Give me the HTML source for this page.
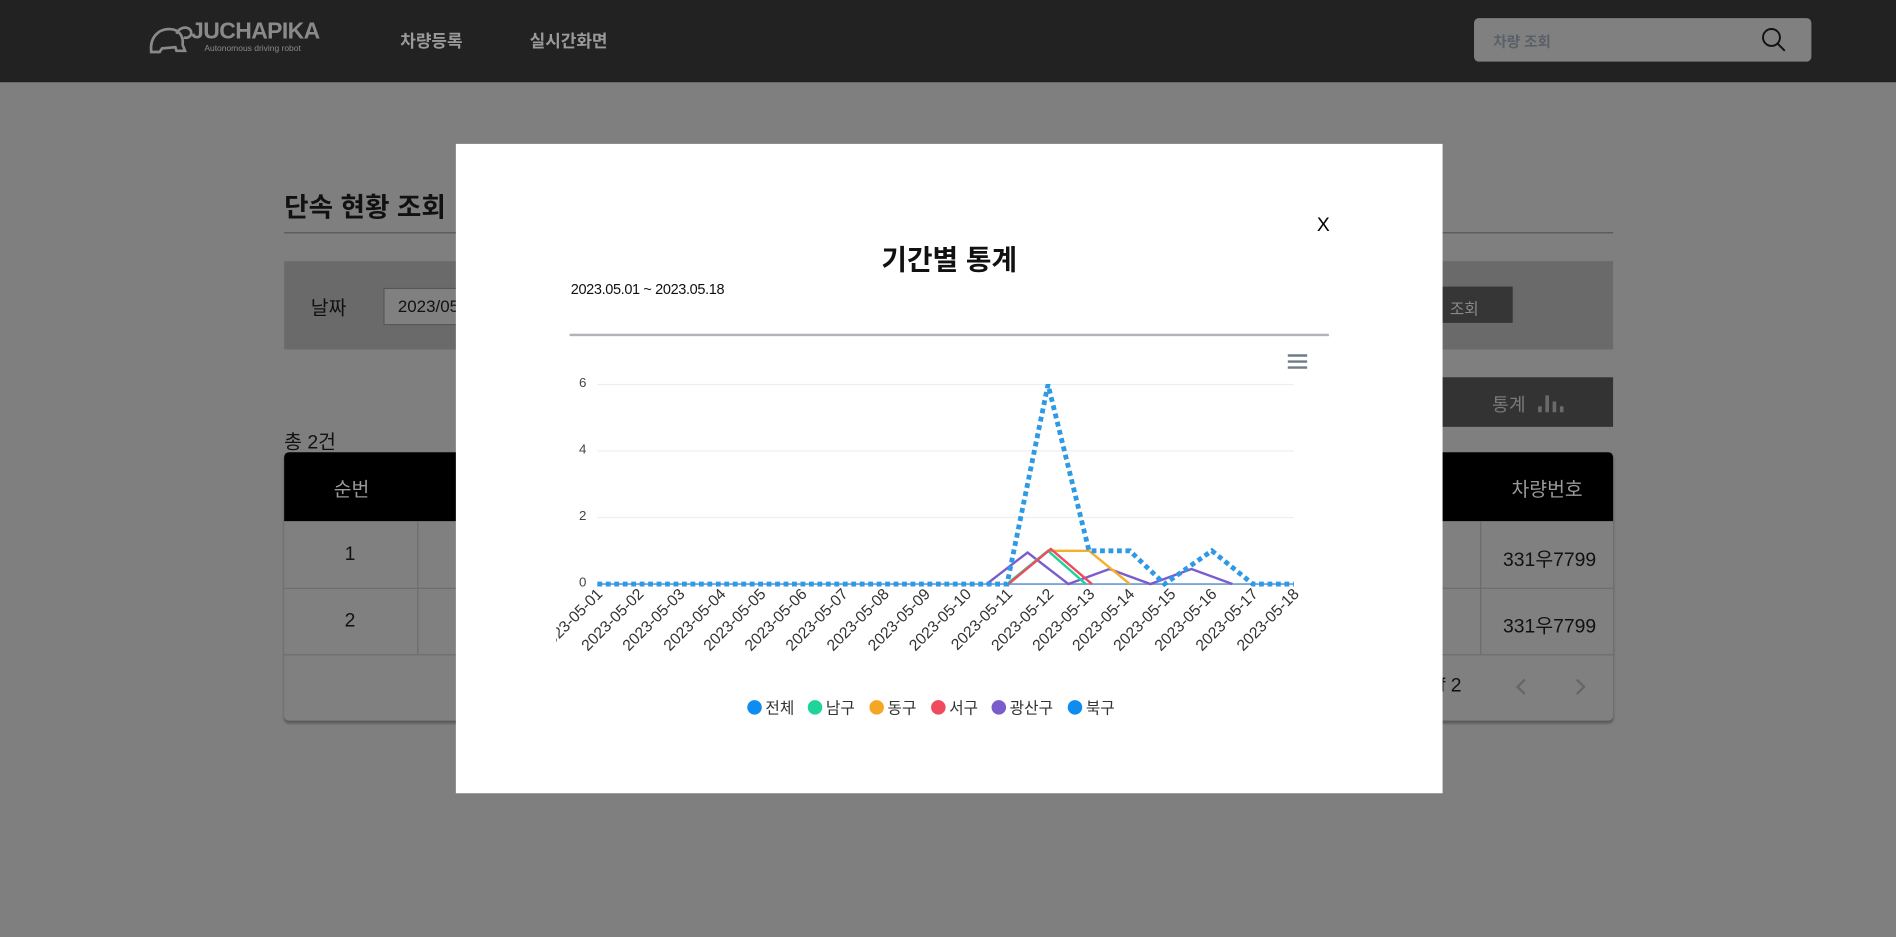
<!DOCTYPE html>
<html><head><meta charset="utf-8"><style>
html,body{margin:0;padding:0;width:1896px;height:937px;overflow:hidden;background:#7f7f7f;font-family:"Liberation Sans","Noto Sans CJK KR",sans-serif}
#w{position:absolute;left:0;top:0;width:1568px;height:775px;transform:scale(1.2092);transform-origin:0 0}
.a{position:absolute;white-space:nowrap}
</style></head><body><div id="w">
<div class="a" style="left:0;top:0;width:1568px;height:68px;background:#222"></div>
<svg class="a" style="left:122px;top:18px" width="38" height="28" viewBox="0 0 38 28"><path d="M3 24 C2 14 8 6 18 6 C26 6 30 12 29 19 L31 24 L24 24 L23 21 L12 22 L10 25 L3 25 Z M24 10 C26 4 34 3 36 8 C37 12 33 14 30 13" fill="none" stroke="#8a8a8a" stroke-width="2.2"/></svg>
<div class="a" style="left:158px;top:16px;font-size:19px;font-weight:bold;color:#8a8a8a;letter-spacing:-0.5px">JUCHAPIKA</div>
<div class="a" style="left:169px;top:37px;font-size:7px;color:#8a8a8a">Autonomous driving robot</div>
<div class="a" style="left:331px;top:24px;font-size:14px;font-weight:bold;color:#9a9a9a">차량등록</div>
<div class="a" style="left:438px;top:24px;font-size:14px;font-weight:bold;color:#9a9a9a">실시간화면</div>
<div class="a" style="left:1219px;top:15px;width:279px;height:36px;background:#808080;border-radius:4px"></div>
<div class="a" style="left:1235px;top:26px;font-size:12px;font-weight:bold;color:#5a6068">차량 조회</div>
<svg class="a" style="left:1456px;top:22px" width="22" height="22" viewBox="0 0 22 22"><circle cx="9" cy="9" r="7" fill="none" stroke="#111" stroke-width="1.6"/><path d="M14 14 L20 20" stroke="#111" stroke-width="1.6"/></svg>

<div class="a" style="left:235px;top:154px;font-size:22px;font-weight:bold;color:#111">단속 현황 조회</div>
<div class="a" style="left:235px;top:192px;width:1099px;height:1px;background:#555"></div>
<div class="a" style="left:235px;top:216px;width:1099px;height:73px;background:#6a6a6a"></div>
<div class="a" style="left:257px;top:241px;font-size:16px;color:#111">날짜</div>
<div class="a" style="left:317px;top:238px;width:80px;height:29px;background:#808080;border:1px solid #555"></div>
<div class="a" style="left:329px;top:245px;font-size:14px;color:#111">2023/05</div>
<div class="a" style="left:1150px;top:237px;width:101px;height:30px;background:#363636"></div>
<div class="a" style="left:1199px;top:245px;font-size:13px;color:#888">조회</div>
<div class="a" style="left:1150px;top:312px;width:184px;height:41px;background:#333"></div>
<div class="a" style="left:1234px;top:324px;font-size:15px;color:#7a7a7a">통계</div>
<svg class="a" style="left:1271px;top:325px" width="22" height="16"><rect x="1" y="11" width="3" height="5" fill="#6a6a6a"/><rect x="7" y="2" width="3" height="14" fill="#6a6a6a"/><rect x="13" y="7" width="3" height="9" fill="#6a6a6a"/><rect x="19" y="11" width="3" height="5" fill="#6a6a6a"/></svg>
<div class="a" style="left:235px;top:352px;font-size:16px;color:#111">총 2건</div>
<div class="a" style="left:235px;top:374px;width:1099px;height:222px;border-radius:4px;background:#808080;box-shadow:0 2px 2px rgba(0,0,0,.3)"></div>
<div class="a" style="left:235px;top:374px;width:1099px;height:57px;background:#000;border-radius:4px 4px 0 0"></div>
<div class="a" style="left:276px;top:391px;font-size:16px;color:#999">순번</div>
<div class="a" style="left:1250px;top:391px;font-size:16px;color:#999">차량번호</div>
<div class="a" style="left:235px;top:486px;width:1099px;height:1px;background:#6c6c6c"></div>
<div class="a" style="left:235px;top:541px;width:1099px;height:1px;background:#6c6c6c"></div>
<div class="a" style="left:345px;top:431px;width:1px;height:110px;background:#6c6c6c"></div>
<div class="a" style="left:1224px;top:431px;width:1px;height:110px;background:#6c6c6c"></div>
<div class="a" style="left:285px;top:450px;font-size:16px;color:#111">1</div>
<div class="a" style="left:285px;top:505px;font-size:16px;color:#111">2</div>
<div class="a" style="left:1243px;top:449px;font-size:16px;color:#111">331우7799</div>
<div class="a" style="left:1243px;top:504px;font-size:16px;color:#111">331우7799</div>
<div class="a" style="left:1182px;top:559px;font-size:16px;color:#111">of 2</div>
<svg class="a" style="left:1250px;top:560px" width="70" height="16"><path d="M11 2 L5 8 L11 14" fill="none" stroke="#666" stroke-width="2"/><path d="M54 2 L60 8 L54 14" fill="none" stroke="#666" stroke-width="2"/></svg>

<div class="a" style="left:377px;top:119px;width:816px;height:537px;background:#fff"></div>
<div class="a" style="left:1089px;top:178px;font-size:16px;color:#000">X</div>
<div class="a" style="left:0;top:196px;width:1570px;text-align:center;font-size:23px;font-weight:bold;color:#111">기간별 통계</div>
<div class="a" style="left:472px;top:232px;font-size:12px;color:#111;letter-spacing:-0.3px">2023.05.01 ~ 2023.05.18</div>
<div class="a" style="left:471px;top:276px;width:628px;height:2px;background:#b0b4b8"></div>
<svg class="a" style="left:0;top:0" width="1568" height="775" font-family="Liberation Sans, sans-serif">
<defs><clipPath id="c"><rect x="460" y="280" width="640" height="300"/></clipPath></defs>
<g stroke="#6e7b8a" stroke-width="2"><path d="M1065 294H1081M1065 299H1081M1065 304H1081"/></g>
<g stroke="#eee" stroke-width="1"><path d="M494 318H1070M494 373H1070M494 428H1070"/></g>
<g font-size="11" fill="#444" text-anchor="end"><text x="485" y="320">6</text><text x="485" y="375">4</text><text x="485" y="430">2</text><text x="485" y="485">0</text></g>
<path d="M494 483H1070" stroke="#7aa7d8" stroke-width="1.5"/>
<polyline points="815.9,483 849.8,456.9 883.6,483 917.5,470.6 951.4,483 985.3,470.6 1019.2,483" fill="none" stroke="#7b5ccc" stroke-width="2"/>
<polyline points="832.8,483 866.7,455.5 900.6,455.5 934.4,483" fill="none" stroke="#f5b02a" stroke-width="2"/>
<polyline points="832.8,483 866.7,455.5 898,483" fill="none" stroke="#1fd49a" stroke-width="2"/>
<polyline points="834,483 869,454 903,483" fill="none" stroke="#ef4a5e" stroke-width="2"/>
<polyline points="494,483 832.8,483 866.7,318 900.6,455.5 934.4,455.5 963,483 1002.2,455.5 1036.1,483 1070,483" fill="none" stroke="#2e9ae6" stroke-width="4" stroke-dasharray="4 3"/>
<g font-size="13" fill="#333" text-anchor="end" clip-path="url(#c)">
<text transform="translate(499,492) rotate(-45)">2023-05-01</text>
<text transform="translate(533,492) rotate(-45)">2023-05-02</text>
<text transform="translate(567,492) rotate(-45)">2023-05-03</text>
<text transform="translate(601,492) rotate(-45)">2023-05-04</text>
<text transform="translate(634,492) rotate(-45)">2023-05-05</text>
<text transform="translate(668,492) rotate(-45)">2023-05-06</text>
<text transform="translate(702,492) rotate(-45)">2023-05-07</text>
<text transform="translate(736,492) rotate(-45)">2023-05-08</text>
<text transform="translate(770,492) rotate(-45)">2023-05-09</text>
<text transform="translate(804,492) rotate(-45)">2023-05-10</text>
<text transform="translate(838,492) rotate(-45)">2023-05-11</text>
<text transform="translate(872,492) rotate(-45)">2023-05-12</text>
<text transform="translate(906,492) rotate(-45)">2023-05-13</text>
<text transform="translate(939,492) rotate(-45)">2023-05-14</text>
<text transform="translate(973,492) rotate(-45)">2023-05-15</text>
<text transform="translate(1007,492) rotate(-45)">2023-05-16</text>
<text transform="translate(1041,492) rotate(-45)">2023-05-17</text>
<text transform="translate(1075,492) rotate(-45)">2023-05-18</text>
</g>
<g font-size="13" fill="#333" font-family="Liberation Sans, Noto Sans CJK KR, sans-serif">
<circle cx="624" cy="585" r="6" fill="#0f8cf0"/><text x="633" y="590">전체</text>
<circle cx="674" cy="585" r="6" fill="#1fd49a"/><text x="683" y="590">남구</text>
<circle cx="725" cy="585" r="6" fill="#f5a623"/><text x="734" y="590">동구</text>
<circle cx="776" cy="585" r="6" fill="#ef4a5e"/><text x="785" y="590">서구</text>
<circle cx="826" cy="585" r="6" fill="#7b5ccc"/><text x="835" y="590">광산구</text>
<circle cx="889" cy="585" r="6" fill="#0f8cf0"/><text x="898" y="590">북구</text>
</g>
</svg>
</div></body></html>
